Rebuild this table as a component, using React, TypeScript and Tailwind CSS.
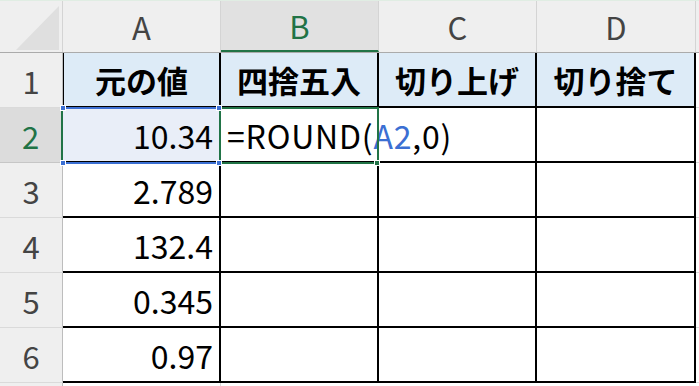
const colLetters = ['A', 'B', 'C', 'D'];
const titles = ['元の値', '四捨五入', '切り上げ', '切り捨て'];
const values = ['10.34', '2.789', '132.4', '0.345', '0.97'];

function Handle({ className }: { className: string }) {
  return <div className={`absolute z-20 h-[6px] w-[6px] border border-white ${className}`} />;
}

function RowHeader({ n, active }: { n?: number; active?: boolean }) {
  return (
    <div
      className={
        active
          ? 'flex w-[63px] shrink-0 items-center justify-center border-b border-r-2 border-b-[#c6c6c6] border-r-[#217346] bg-[#dcdcdc] text-[31px] text-[#217346]'
          : 'flex w-[63px] shrink-0 items-center justify-center border-b border-r border-b-[#dadada] border-r-[#bdbdbd] bg-[#efefef] text-[31px] text-[#444]'
      }
    >
      {n}
    </div>
  );
}

export default function App() {
  return (
    <div className="h-[386px] w-[699px] overflow-hidden border-t border-[#e0ede3] bg-white font-['Noto_Sans_CJK_JP',sans-serif] leading-none">
      {/* column headers */}
      <div className="flex h-[52px] border-b border-[#ababab] bg-[#efefef]">
        <div className="w-[63px] shrink-0 border-r border-[#d4d4d4]">
          <svg width="62" height="51" viewBox="0 0 62 51">
            <polygon points="59,5 59,49 16,49" fill="#dfdfdf" />
          </svg>
        </div>
        {colLetters.map((c, i) => (
          <div
            key={c}
            className={
              c === 'B'
                ? 'flex w-[158px] shrink-0 items-center justify-center border-b-2 border-r border-b-[#217346] border-r-[#d4d4d4] bg-[#e1e1e1] text-[31px] text-[#217346]'
                : `flex ${i === 3 ? 'w-[159px]' : 'w-[158px]'} shrink-0 items-center justify-center border-r border-[#d4d4d4] text-[31px] text-[#444]`
            }
          >
            {c}
          </div>
        ))}
        <div className="flex-1" />
      </div>

      {/* row 1: titles */}
      <div className="flex h-[55px]">
        <RowHeader n={1} />
        {titles.map((t, i) => (
          <div
            key={t}
            className={`flex ${i === 3 ? 'w-[159px]' : 'w-[158px]'} shrink-0 items-center justify-center border-b-2 border-r-2 border-black bg-[#ddebf7] text-[31px] font-bold text-black ${i === 0 ? 'border-l' : ''}`}
          >
            {t}
          </div>
        ))}
        <div className="flex-1 border-b border-[#dadada]" />
      </div>

      {/* row 2: active row */}
      <div className="flex h-[55px]">
        <RowHeader n={2} active />
        <div className="relative flex w-[158px] shrink-0 items-center justify-end border-b-2 border-r-2 border-black bg-[#e9eef8] pr-[6px] text-[32px] text-black">
          {values[0]}
          <div className="absolute -top-[1px] left-0 z-10 h-[2px] w-[158px] bg-[#3b6fd3]" />
          <div className="absolute top-[54px] left-0 z-10 h-[2px] w-[158px] bg-[#3b6fd3]" />
          <Handle className="-left-[3px] -top-[3px] bg-[#3b6fd3]" />
          <Handle className="-right-[3px] -top-[3px] bg-[#3b6fd3]" />
          <Handle className="-left-[3px] top-[52px] bg-[#3b6fd3]" />
          <Handle className="-right-[3px] top-[52px] bg-[#3b6fd3]" />
        </div>
        <div className="relative flex w-[158px] shrink-0 items-center border-b-2 border-r-2 border-black pl-[6px] text-[32px] tracking-[0.8px] text-black">
          <span className="whitespace-nowrap">
            =ROUND(<span className="text-[#3b6fd3]">A2</span>,0)
          </span>
          <div className="absolute -left-[2px] -top-[1px] z-10 h-[57px] w-[160px] border-2 border-[#217346]" />
          <Handle className="-right-[3px] top-[52px] bg-[#217346]" />
        </div>
        <div className="w-[158px] shrink-0 border-b-2 border-r-2 border-black" />
        <div className="w-[159px] shrink-0 border-b-2 border-r-2 border-black" />
        <div className="flex-1 border-b border-[#dadada]" />
      </div>

      {/* rows 3-6 */}
      {values.slice(1).map((v, idx) => (
        <div key={v} className="flex h-[55px]">
          <RowHeader n={idx + 3} />
          <div className="flex w-[158px] shrink-0 items-center justify-end border-b-2 border-r-2 border-black pr-[6px] text-[32px] text-black">
            {v}
          </div>
          <div className="w-[158px] shrink-0 border-b-2 border-r-2 border-black" />
          <div className="w-[158px] shrink-0 border-b-2 border-r-2 border-black" />
          <div className="w-[159px] shrink-0 border-b-2 border-r-2 border-black" />
          <div className="flex-1 border-b border-[#dadada]" />
        </div>
      ))}

      {/* row 7, cut off by the window */}
      <div className="flex h-[55px]">
        <RowHeader />
        <div className="w-[158px] shrink-0 border-r border-[#dadada]" />
      </div>
    </div>
  );
}
